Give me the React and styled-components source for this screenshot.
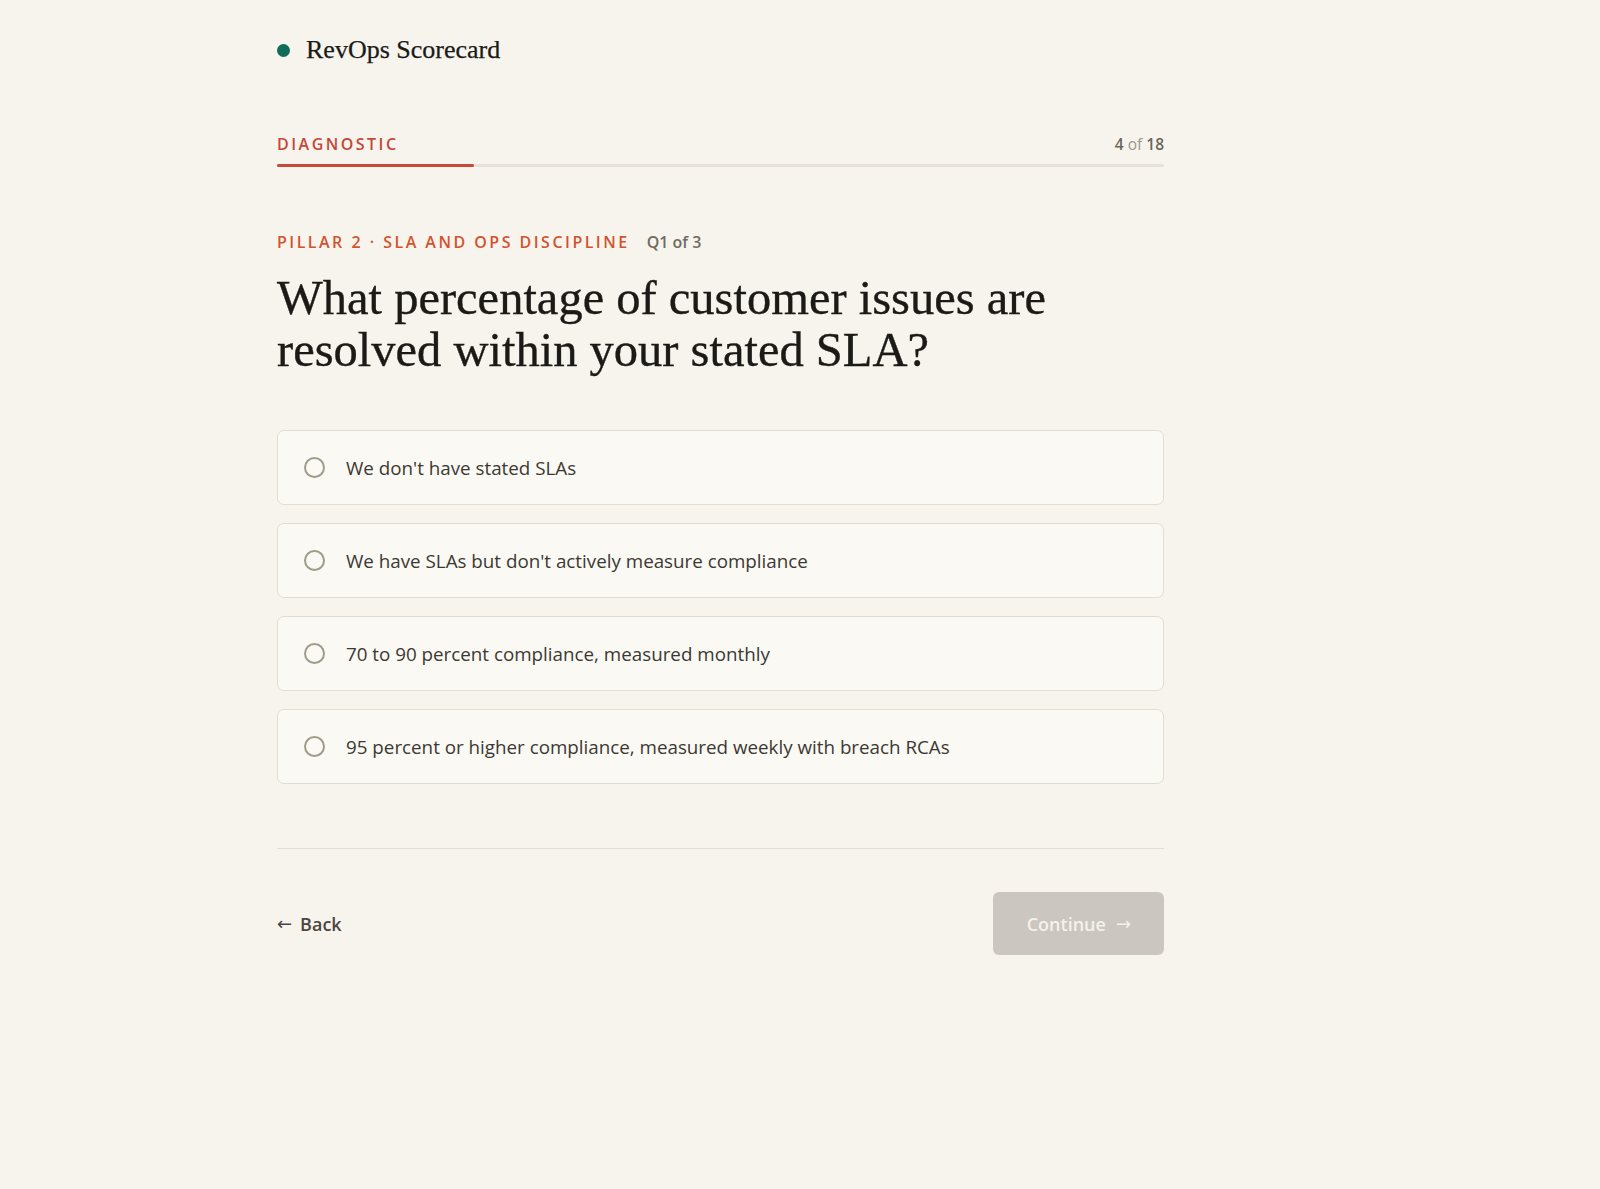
import React, { useState } from "react";
import styled, { createGlobalStyle } from "styled-components";

const GlobalStyle = createGlobalStyle`
  html, body {
    margin: 0;
    padding: 0;
    background: #f7f4ed;
  }
  body {
    font-family: "Open Sans", "Noto Sans", sans-serif;
    color: #2b2925;
    min-height: 1189px;
  }
  * { box-sizing: border-box; }
`;

const Page = styled.div`
  min-height: 1189px;
  padding: 36px 0 80px 277px;
`;

const Main = styled.main`
  width: 887px;
  display: flex;
  flex-direction: column;
`;

const Brand = styled.header`
  display: flex;
  align-items: center;
  gap: 16px;
  height: 28px;
`;

const BrandDot = styled.span`
  width: 13px;
  height: 13px;
  border-radius: 50%;
  background: #0f6b5a;
`;

const BrandName = styled.span`
  font-family: "Liberation Serif", serif;
  font-size: 26px;
  color: #1a1a18;
  -webkit-text-stroke: 0.25px #1a1a18;
`;

const ProgressHead = styled.div`
  margin-top: 70px;
  display: flex;
  justify-content: space-between;
  align-items: center;
  height: 20px;
`;

const Eyebrow = styled.span`
  font-size: 16px;
  font-weight: 600;
  letter-spacing: 0.155em;
  color: ${(p) => p.$color || "#c4473a"};
  text-transform: uppercase;
`;

const Count = styled.span`
  font-size: 15.5px;
  font-weight: 600;
  color: #77736a;
  b {
    font-weight: 600;
    color: #6a665d;
  }
  em {
    font-style: normal;
    font-weight: 500;
    color: #9c978c;
  }
`;

const Track = styled.div`
  margin-top: 10px;
  height: 3px;
  border-radius: 2px;
  background: #e6e1d9;
  display: flex;
`;

const Fill = styled.div`
  height: 100%;
  border-radius: 2px;
  background: #c9493a;
`;

const QuestionMeta = styled.div`
  margin-top: 64px;
  display: flex;
  align-items: baseline;
  gap: 17px;
  height: 20px;
`;

const QCount = styled.span`
  font-size: 16px;
  font-weight: 600;
  color: #6f6b62;
`;

const Question = styled.h1`
  margin: 21px 0 0;
  font-family: "Liberation Serif", serif;
  font-weight: 400;
  font-size: 48.5px;
  line-height: 52px;
  color: #1b1a17;
  max-width: 870px;
  -webkit-text-stroke: 0.35px #1b1a17;
`;

const Options = styled.div`
  margin-top: 54px;
  display: flex;
  flex-direction: column;
  gap: 18px;
`;

const Option = styled.button`
  display: flex;
  align-items: center;
  gap: 21px;
  height: 75px;
  padding: 0 26px;
  border: 1px solid ${(p) => (p.$selected ? "#0f6b5a" : "#e2ddd4")};
  border-radius: 7px;
  background: #fbf9f4;
  font-family: inherit;
  font-size: 18.8px;
  color: #3b3833;
  text-align: left;
  cursor: pointer;
`;

const Radio = styled.span`
  flex: none;
  width: 21px;
  height: 21px;
  border-radius: 50%;
  border: 2px solid ${(p) => (p.$selected ? "#0f6b5a" : "#a09b89")};
  background: ${(p) => (p.$selected ? "radial-gradient(#0f6b5a 45%, transparent 50%)" : "transparent")};
`;

const Divider = styled.hr`
  margin: 64px 0 0;
  border: 0;
  border-top: 1px solid #e3ded5;
`;

const Footer = styled.div`
  margin-top: 43px;
  display: flex;
  justify-content: space-between;
  align-items: center;
`;

const Arrow = styled.span`
  font-family: "DejaVu Sans", sans-serif;
  font-weight: 400;
  font-size: 18px;
  line-height: 1;
`;

const BackLink = styled.button`
  border: 0;
  background: none;
  padding: 0;
  font-family: inherit;
  font-size: 18px;
  font-weight: 600;
  color: #4a463f;
  display: flex;
  align-items: center;
  gap: 8px;
  cursor: pointer;
`;

const ContinueButton = styled.button`
  height: 63px;
  padding: 0 33px 0 34px;
  border: 0;
  border-radius: 6px;
  background: ${(p) => (p.disabled ? "#cbc7c0" : "#0f6b5a")};
  color: #f4f1eb;
  font-family: inherit;
  font-size: 18px;
  font-weight: 600;
  display: flex;
  align-items: center;
  gap: 10px;
  cursor: ${(p) => (p.disabled ? "default" : "pointer")};
`;

const answers = [
  "We don't have stated SLAs",
  "We have SLAs but don't actively measure compliance",
  "70 to 90 percent compliance, measured monthly",
  "95 percent or higher compliance, measured weekly with breach RCAs",
];

export default function App() {
  const [picked, setPicked] = useState(null);
  const step = 4;
  const total = 18;

  return (
    <>
      <GlobalStyle />
      <Page>
        <Main>
          <Brand>
            <BrandDot />
            <BrandName>RevOps Scorecard</BrandName>
          </Brand>

          <ProgressHead>
            <Eyebrow>Diagnostic</Eyebrow>
            <Count>
              <b>{step}</b> <em>of</em> <b>{total}</b>
            </Count>
          </ProgressHead>
          <Track>
            <Fill style={{ width: `${(step / total) * 100}%` }} />
          </Track>

          <QuestionMeta>
            <Eyebrow $color="#d2532e">Pillar 2 · SLA and Ops Discipline</Eyebrow>
            <QCount>Q1 of 3</QCount>
          </QuestionMeta>
          <Question>What percentage of customer issues are resolved within your stated SLA?</Question>

          <Options>
            {answers.map((a, i) => (
              <Option key={a} $selected={picked === i} onClick={() => setPicked(i)}>
                <Radio $selected={picked === i} />
                {a}
              </Option>
            ))}
          </Options>

          <Divider />
          <Footer>
            <BackLink>
              <Arrow>←</Arrow>Back
            </BackLink>
            <ContinueButton disabled={picked === null}>
              Continue <Arrow>→</Arrow>
            </ContinueButton>
          </Footer>
        </Main>
      </Page>
    </>
  );
}
